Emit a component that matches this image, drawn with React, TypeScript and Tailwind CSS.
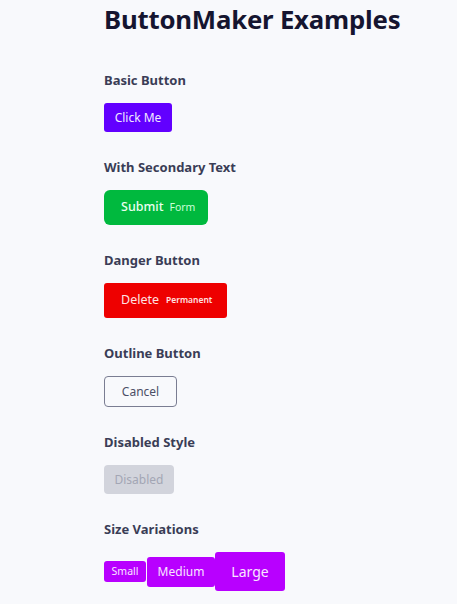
import React from "react";

function Section({ title, children }: { title: string; children: React.ReactNode }) {
  return (
    <div>
      <p className="text-[13px] leading-[22px] font-bold text-[#3a3d56] mb-3">{title}</p>
      {children}
    </div>
  );
}

export default function App() {
  return (
    <div
      className="min-h-[604px] bg-[#f8f9fc] pl-[104px] pt-[2px]"
      style={{ fontFamily: '"Noto Sans", "Open Sans", sans-serif' }}
    >
      <h1 className="text-[25.75px] leading-[34px] font-bold text-[#151530] tracking-[-0.2px]">
        ButtonMaker Examples
      </h1>
      <div className="mt-[33px] flex flex-col gap-6">
        <Section title="Basic Button">
          <button
            type="button"
            className="h-[29px] w-[68px] text-[12px] bg-[#6200ff] text-[#f1e9ff] rounded-[3px]"
          >
            Click Me
          </button>
        </Section>

        <Section title="With Secondary Text">
          <button
            type="button"
            className="h-[35px] w-[104px] pl-[17px] flex items-center bg-[#00b93e] rounded-md"
          >
            <span className="text-[12.5px] font-medium text-[#eafff0]">Submit</span>
            <span className="ml-[6px] text-[10.5px] text-[#c9ffd8]">Form</span>
          </button>
        </Section>

        <Section title="Danger Button">
          <button
            type="button"
            className="h-[35px] w-[123px] pl-[17px] flex items-center bg-[#ee0000] rounded-[3px]"
          >
            <span className="text-[12.5px] text-[#ffe2e2]">Delete</span>
            <span className="ml-[7px] text-[8.5px] font-semibold text-[#ffe2e2]">Permanent</span>
          </button>
        </Section>

        <Section title="Outline Button">
          <button
            type="button"
            className="h-[31px] w-[73px] text-[12px] border border-[#7a7d92] text-[#4b4f66] rounded"
          >
            Cancel
          </button>
        </Section>

        <Section title="Disabled Style">
          <button
            type="button"
            disabled
            className="h-[29px] w-[70px] text-[12px] bg-[#d2d4dc] text-[#a3a6b4] rounded cursor-not-allowed"
          >
            Disabled
          </button>
        </Section>

        <Section title="Size Variations">
          <div className="flex items-center">
            <button
              type="button"
              className="h-[21px] w-[42px] text-[10.5px] bg-[#b800ff] text-[#f8e6ff] rounded-[3px]"
            >
              Small
            </button>
            <button
              type="button"
              className="ml-px h-[30px] w-[68px] text-[12px] bg-[#b800ff] text-[#f8e6ff] rounded-[3px]"
            >
              Medium
            </button>
            <button
              type="button"
              className="h-[39px] w-[70px] text-[14px] bg-[#b800ff] text-[#f8e6ff] rounded-[3px]"
            >
              Large
            </button>
          </div>
        </Section>
      </div>
    </div>
  );
}
